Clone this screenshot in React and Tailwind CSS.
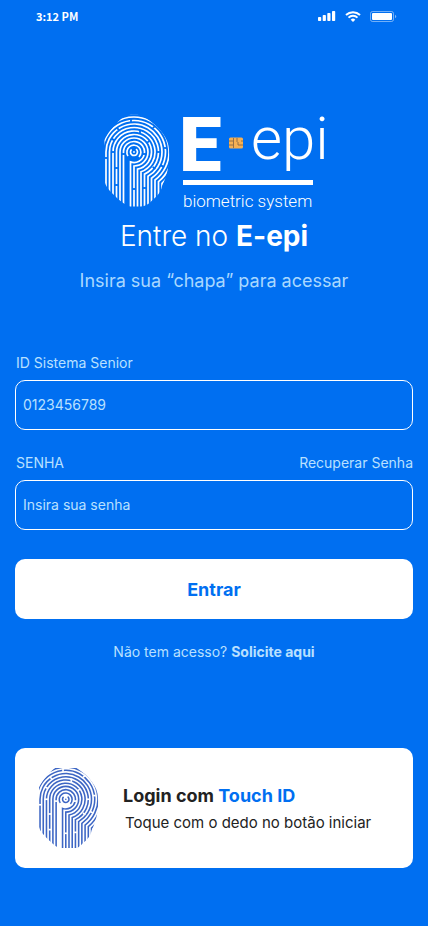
import { useId } from "react";

const PITCH = 3.5;

const RIDGES = Array.from({ length: 15 }, (_, i) => {
  const r = (i + 2) * PITCH;
  // The innermost ridge is an open ring, not an arch
  if (i === 0) return "M-6 4A7 7 0 1 1 5 5";
  const x = r - 4 * PITCH;
  const y = Math.sqrt(r * r - x * x);
  return `M${-r} 60V0A${r} ${r} 0 1 1 ${x} ${y}V60`;
});

// Small breaks in the ridges: x, y, rotation in degrees
const GAPS = [
  [-3, -31.5, 90], [6, -20.5, 90], [-16, -23, 45], [-21, -12.5, 30],
  [-28, 6, 0], [-21, 0, 0], [-17.5, 16, 0], [-7, 20, 0], [-17.5, 33, 0],
  [0, 37, 0], [10.5, 36, 0], [-10.5, 2, 0], [10.5, 2, 0],
  [24.5, 0, 0], [31, -4, 0], [20, 16, 40], [20, -25, -40],
  [14, -10, -40], [28, 14, 30],
];

function Fingerprint({ className, viewBox }) {
  const id = useId();
  return (
    <svg className={className} viewBox={viewBox} fill="none" aria-hidden="true">
      <mask id={id} maskUnits="userSpaceOnUse" x="-34" y="-40" width="72" height="100">
        <path
          d="M0-37.5C5-37.5 10-36 14-32.5C24-26 35-14 35-2C36 12 33 24 28 34C27 41 22 45 18 48.5C15 52 11 54.5 7 54.5H-4C-11 52-16 47-20 43C-25 38-29 34-29.5 28V-12C-27-18-20-27-14-32C-10-36-5-37.5 0-37.5Z"
          fill="white"
        />
        {GAPS.map(([x, y, a]) => (
          <rect
            key={`${x},${y}`}
            x="-1.7"
            y="-0.9"
            width="3.4"
            height="1.8"
            fill="black"
            transform={`translate(${x} ${y}) rotate(${a})`}
          />
        ))}
      </mask>
      <g mask={`url(#${id})`} stroke="currentColor" strokeWidth="1.7">
        <circle r="0.9" fill="currentColor" stroke="none" />
        <path d="M-2.4-2.6A3.5 3.5 0 1 0 2-2.9" />
        {RIDGES.map((d) => (
          <path key={d} d={d} />
        ))}
      </g>
    </svg>
  );
}

function Chip() {
  return (
    <svg className="mt-6 ml-[10px] h-3 w-[14px] shrink-0" viewBox="0 0 14 12" aria-hidden="true">
      <rect y="0.5" width="14" height="11" rx="1.5" fill="#f5b054" />
      <path
        d="M0 4H4.5V1M0 8H4.5V11M4.5 4V8M14 4H12M14 8H9V5M8 1V5"
        stroke="#8a6a48"
        strokeWidth="0.9"
        fill="none"
      />
    </svg>
  );
}

function StatusBar() {
  return (
    <div className="flex h-8 items-center justify-between pr-[31px] pl-9">
      <span className="font-['Noto_Sans_CJK_JP',sans-serif] text-[11px] leading-4 font-bold">3:12 PM</span>
      <div className="flex items-center">
        <svg className="h-[10px] w-[18px]" viewBox="0 0 18 10" fill="currentColor" aria-hidden="true">
          <rect x="0" y="6" width="3.2" height="4" rx="0.8" />
          <rect x="4.7" y="4" width="3.2" height="6" rx="0.8" />
          <rect x="9.3" y="2" width="3.2" height="8" rx="0.8" />
          <rect x="14" y="0" width="3.2" height="10" rx="0.8" />
        </svg>
        <svg className="ml-[9px] h-[11px] w-4" viewBox="0 0 16 11" fill="none" stroke="currentColor" aria-hidden="true">
          <path d="M1 4A10.2 10.2 0 0 1 15 4" strokeWidth="2" />
          <path d="M3.5 6.6A6.5 6.5 0 0 1 12.5 6.6" strokeWidth="1.9" />
          <path d="M8 11L5.7 8.7A3.3 3.3 0 0 1 10.3 8.7Z" fill="currentColor" stroke="none" />
        </svg>
        <svg className="ml-[9px] h-[11px] w-[27px]" viewBox="0 0 27 11" fill="none" aria-hidden="true">
          <rect x="0.5" y="0.5" width="23" height="10" rx="2" stroke="white" strokeOpacity="0.45" />
          <rect x="2" y="2" width="20" height="7" rx="1" fill="white" />
          <path d="M25 3.8V7.2Q26.2 6.8 26.2 5.5Q26.2 4.2 25 3.8Z" fill="white" fillOpacity="0.5" />
        </svg>
      </div>
    </div>
  );
}

function Logo() {
  return (
    <div className="flex justify-center gap-[13px] font-[Roboto,sans-serif]">
      <Fingerprint className="h-[96px] w-[66px] shrink-0" viewBox="-30 -39 66 96" />
      <div className="w-[141px]">
        <div className="flex h-[67px] items-start">
          <span className="-ml-1 w-10 text-[76px] leading-[64px] font-black">E</span>
          <Chip />
          <span className="ml-2 text-[60px] leading-[52px] font-light">epi</span>
        </div>
        <div className="h-[5px] w-[130px] bg-white" />
        <p className="mt-[5px] text-[17px] leading-[22px] font-light whitespace-nowrap">biometric system</p>
      </div>
    </div>
  );
}

const inputClass =
  "block h-[50px] w-full rounded-[10px] border border-white bg-transparent px-[7px] pb-[2px] text-sm text-[#b9e0ff] placeholder:text-[#b9e0ff] outline-none";

export default function App() {
  return (
    <div className="min-h-screen bg-[#006ff1] font-[Inter,sans-serif] text-white">
      <StatusBar />
      <main className="px-[15px] pt-[81px] pb-14">
        <Logo />
        <h1 className="mt-[6px] text-center text-[28px] leading-9 font-light">
          Entre no <strong className="font-bold">E-epi</strong>
        </h1>
        <p className="mt-[13px] text-center text-lg text-[#a9d8ff]">Insira sua “chapa” para acessar</p>

        <form className="mt-[58px] text-sm text-[#b9e0ff]" onSubmit={(e) => e.preventDefault()}>
          <label htmlFor="user-id" className="ml-px block">
            ID Sistema Senior
          </label>
          <input id="user-id" type="text" placeholder="0123456789" className={`mt-[7px] ${inputClass}`} />
          <div className="mt-[23px] flex justify-between pl-px">
            <label htmlFor="password">SENHA</label>
            <a href="#recuperar">Recuperar Senha</a>
          </div>
          <input id="password" type="password" placeholder="Insira sua senha" className={`mt-[7px] ${inputClass}`} />
          <button
            type="submit"
            className="mt-[29px] h-[60px] w-full rounded-[10px] bg-white pt-[2px] text-lg font-bold text-[#006ff1]"
          >
            Entrar
          </button>
        </form>

        <p className="mt-[23px] text-center text-sm text-[#b9e0ff]">
          Não tem acesso?{" "}
          <a href="#solicitar" className="font-bold">
            Solicite aqui
          </a>
        </p>

        <button
          type="button"
          className="mt-[86px] flex h-[120px] w-full items-center rounded-[10px] bg-white pl-6 text-left text-[#222222]"
        >
          <Fingerprint className="h-20 w-[60px] shrink-0 text-[#3d66c4]" viewBox="-29 -34 65 87" />
          <span className="ml-6 flex flex-col gap-px">
            <span className="text-lg leading-7 font-bold">
              Login com <span className="text-[#006ff1]">Touch ID</span>
            </span>
            <span className="ml-[2px] text-[15px] leading-6">Toque com o dedo no botão iniciar</span>
          </span>
        </button>
      </main>
    </div>
  );
}
